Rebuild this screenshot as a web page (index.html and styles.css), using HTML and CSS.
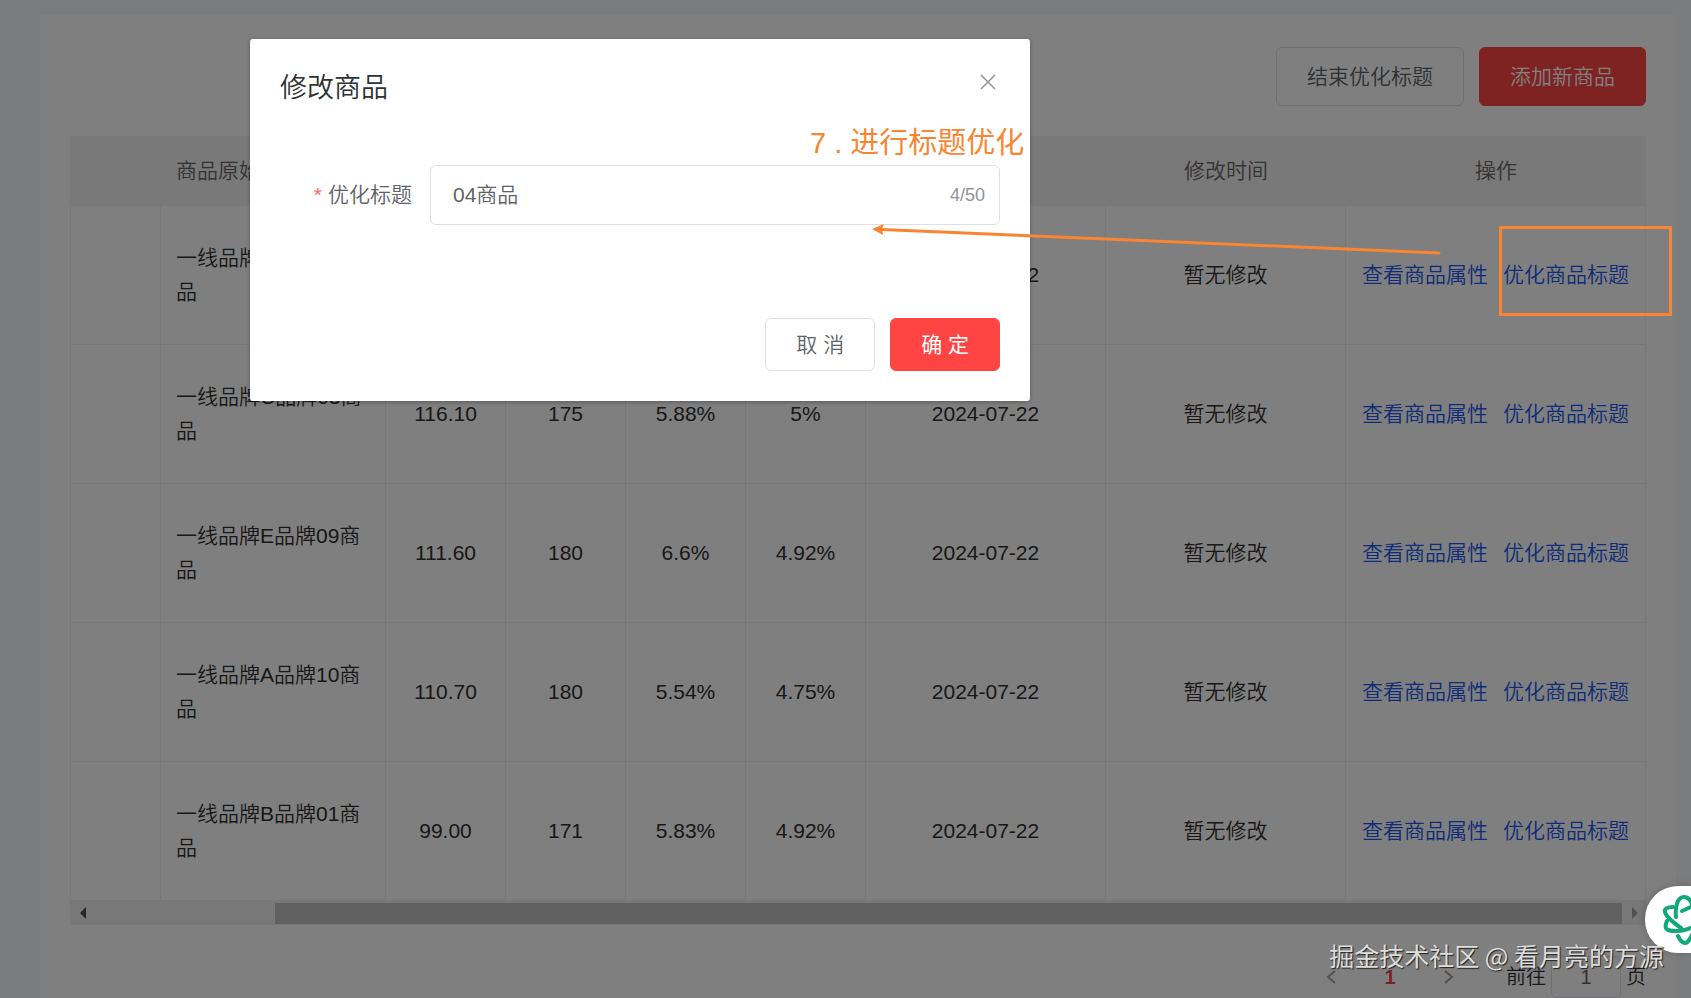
FILE: index.html
```html
<!DOCTYPE html>
<html lang="zh-CN">
<head>
<meta charset="utf-8">
<title>商品管理</title>
<link rel="stylesheet" href="styles.css">
</head>
<body>
<main class="panel">
  <div class="toolbar">
    <button class="btn btn-large" type="button">结束优化标题</button>
    <button class="btn btn-large btn-primary" type="button">添加新商品</button>
  </div>

  <div class="grid">
    <table class="goods">
      <colgroup>
        <col class="col-pick"><col class="col-title"><col class="col-num"><col class="col-num"><col class="col-num"><col class="col-num"><col class="col-date"><col class="col-date"><col class="col-action">
      </colgroup>
      <thead>
        <tr><th></th><th class="left">商品原始标题</th><th></th><th></th><th></th><th></th><th></th><th>修改时间</th><th>操作</th></tr>
      </thead>
      <tbody>
        <tr><td></td><td class="left">一线品牌D品牌04商品</td><td></td><td></td><td></td><td></td><td>2024-07-22</td><td>暂无修改</td><td><div class="links"><a href="#">查看商品属性</a><a href="#">优化商品标题</a></div></td></tr>
        <tr><td></td><td class="left">一线品牌C品牌03商品</td><td>116.10</td><td>175</td><td>5.88%</td><td>5%</td><td>2024-07-22</td><td>暂无修改</td><td><div class="links"><a href="#">查看商品属性</a><a href="#">优化商品标题</a></div></td></tr>
        <tr><td></td><td class="left">一线品牌E品牌09商品</td><td>111.60</td><td>180</td><td>6.6%</td><td>4.92%</td><td>2024-07-22</td><td>暂无修改</td><td><div class="links"><a href="#">查看商品属性</a><a href="#">优化商品标题</a></div></td></tr>
        <tr><td></td><td class="left">一线品牌A品牌10商品</td><td>110.70</td><td>180</td><td>5.54%</td><td>4.75%</td><td>2024-07-22</td><td>暂无修改</td><td><div class="links"><a href="#">查看商品属性</a><a href="#">优化商品标题</a></div></td></tr>
        <tr><td></td><td class="left">一线品牌B品牌01商品</td><td>99.00</td><td>171</td><td>5.83%</td><td>4.92%</td><td>2024-07-22</td><td>暂无修改</td><td><div class="links"><a href="#">查看商品属性</a><a href="#">优化商品标题</a></div></td></tr>
      </tbody>
    </table>
    <div class="scrollbar">
      <svg class="scroll-arrow" viewBox="0 0 24 24" aria-hidden="true"><path d="M16 6v12l-6-6z" fill="#505050"/></svg>
      <div class="scroll-track"><div class="scroll-thumb"></div></div>
      <svg class="scroll-arrow" viewBox="0 0 24 24" aria-hidden="true"><path d="M10 6v12l6-6z" fill="#a3a3a3"/></svg>
    </div>
  </div>

  <nav class="pager" aria-label="分页">
    <button class="page-btn" type="button" aria-label="上一页"><svg viewBox="0 0 16 16"><path d="M11 2 4 8l7 6"/></svg></button>
    <button class="page-btn page-current" type="button">1</button>
    <button class="page-btn" type="button" aria-label="下一页"><svg viewBox="0 0 16 16"><path d="m5 2 7 6-7 6"/></svg></button>
    <label class="jump">前往<input class="jump-input" type="text" value="1">页</label>
  </nav>
</main>

<div class="overlay">
  <section class="dialog" role="dialog" aria-labelledby="dialog-title">
    <header class="dialog-head">
      <h2 class="dialog-title" id="dialog-title">修改商品</h2>
      <button class="close" type="button" aria-label="关闭"><svg viewBox="0 0 16 16"><path d="M1 1l14 14M15 1 1 15"/></svg></button>
    </header>
    <form class="dialog-form">
      <label class="field-label" for="title-input"><span class="required">*</span>优化标题</label>
      <div class="field">
        <input class="field-input" id="title-input" type="text" value="04商品" maxlength="50">
        <span class="counter">4/50</span>
      </div>
    </form>
    <footer class="dialog-foot">
      <button class="btn" type="button">取 消</button>
      <button class="btn btn-primary btn-confirm" type="button">确 定</button>
    </footer>
  </section>
</div>

<p class="note">7 . 进行标题优化</p>
<svg class="marks" width="1691" height="998" aria-hidden="true">
  <path d="M1439 253 882 229.500" fill="none" stroke="#f98532" stroke-width="3" stroke-linecap="round"/>
  <path d="M872 229l12-5-2 5 1 6z" fill="#f98532"/>
  <rect x="1500.500" y="227.500" width="170" height="87" fill="none" stroke="#f98532" stroke-width="3"/>
</svg>

<button class="assistant" type="button" aria-label="助手">
  <svg viewBox="0 0 46 67" fill="none" stroke="#12a87a" stroke-width="4" stroke-linecap="round" stroke-linejoin="round">
    <path d="M31 31C30 22 32 11 39 11c5 0 7 4 9 9"/>
    <path d="M37 25l11-5"/>
    <path d="M28 21c-6 0-9 2-8 5 1 5 9 11 16 16"/>
    <path d="M22 35c-2 4-2 8 1 9 6 2 15 1 25-3"/>
    <path d="M33 50c2 4 5 7 7 7 3 0 5-4 8-10"/>
  </svg>
</button>
<p class="watermark">掘金技术社区 @ 看月亮的方源</p>
</body>
</html>
```
FILE: styles.css
```css
* { box-sizing: border-box; }

body {
  margin: 0;
  min-height: 100vh;
  padding: 15px 15px 0 40px;
  overflow: hidden;
  background: #f6f8fb;
  color: #303030;
  font: 350 21px/34px "Liberation Sans", "Noto Sans CJK SC", sans-serif;
}

button, input { font: inherit; }
p, h2 { margin: 0; }

.panel {
  height: calc(100vh - 15px);
  padding: 32px 30px 0;
  background: #fff;
}

.toolbar { display: flex; justify-content: flex-end; gap: 15px; }

.btn {
  height: 53px;
  padding: 0 30px;
  border: 1px solid #dcdfe6;
  border-radius: 6px;
  background: #fff;
  color: #606266;
  line-height: 24px;
  white-space: pre;
}
.btn-large { height: 59px; }
.btn-primary { border-color: #ff4444; background: #ff4444; color: #fff; }
.btn-confirm { font-weight: 400; }

.grid { margin-top: 30px; }

.goods { width: 100%; table-layout: fixed; border-collapse: separate; border-spacing: 0; border-left: 1px solid #ebeef5; }
.col-pick { width: 90px; }
.col-title { width: 225px; }
.col-num { width: 120px; }
.col-date { width: 240px; }
.goods th { height: 70px; padding: 0; background: #f2f2f2; color: #686868; font-weight: 350; }
.goods td { height: 139px; padding: 0 15px; border-right: 1px solid #ebeef5; border-bottom: 1px solid #ebeef5; text-align: center; }
.goods .left { padding: 0 15px; text-align: left; white-space: nowrap; overflow: hidden; }
.goods td.left { white-space: normal; }
.links { display: flex; justify-content: center; gap: 15px; white-space: nowrap; }
.links a { color: #2058f0; text-decoration: none; }
.goods td:last-child { padding: 0; }

.scrollbar { display: flex; align-items: center; height: 24px; background: #f1f1f1; }
.scroll-arrow { width: 24px; height: 24px; flex: none; }
.scroll-track { flex: 1; padding-left: 181px; }
.scroll-thumb { height: 21px; background: #c1c1c1; }

.pager { display: flex; justify-content: flex-end; align-items: center; margin-top: 31px; height: 42px; font-size: 20px; }
.page-btn { display: flex; align-items: center; justify-content: center; width: 58px; height: 42px; padding: 0; border: 0; background: none; }
.page-btn svg { width: 16px; height: 16px; fill: none; stroke: #a0a0a0; stroke-width: 2; }
.page-current { color: #ff4444; font-weight: 700; }
.jump { display: flex; align-items: center; gap: 5px; margin-left: 29px; }
.jump-input { width: 70px; height: 42px; padding: 0; border: 1px solid #dcdfe6; border-radius: 6px; background: #fff; color: #606266; text-align: center; }

.overlay { position: absolute; inset: 0; padding-top: 39px; background: rgba(0, 0, 0, .5); }

.dialog {
  width: 780px;
  margin-left: 250px;
  border-radius: 3px;
  background: #fff;
  box-shadow: 0 1px 4px rgba(0, 0, 0, .3);
}
.dialog-head { display: flex; justify-content: space-between; padding: 31px 30px 14px; }
.dialog-title { color: #303133; font-size: 27px; font-weight: 350; line-height: 36px; }
.close { display: flex; align-items: center; justify-content: center; width: 24px; height: 24px; padding: 0; border: 0; background: none; }
.close svg { width: 16px; height: 16px; fill: none; stroke: #909399; stroke-width: 1.5; }
.dialog-form { display: flex; padding: 45px 30px 0; }
.field-label { width: 150px; padding-right: 18px; color: #606266; line-height: 60px; text-align: right; }
.required { margin-right: 6px; color: #f56c6c; }
.field { display: flex; flex: 1; height: 60px; padding: 0 14px 0 22px; border: 1px solid #dcdfe6; border-radius: 6px; align-items: center; }
.field-input { flex: 1; min-width: 0; padding: 0; border: 0; outline: 0; background: none; color: #606266; }
.counter { color: #909399; font-size: 18px; }
.dialog-foot { display: flex; justify-content: flex-end; gap: 15px; padding: 93px 30px 30px; }

.note { position: absolute; left: 810px; top: 123px; color: #f98532; font-size: 29px; font-weight: 400; line-height: 40px; white-space: nowrap; }
.marks { position: absolute; left: 0; top: 0; }

.assistant { position: absolute; right: 0; top: 886px; width: 46px; height: 67px; padding: 0; border: 0; border-radius: 33px 0 0 33px; background: #fff; overflow: hidden; box-shadow: 0 0 9px rgba(0, 0, 0, .2); }
.assistant svg { display: block; width: 46px; height: 67px; }

.watermark { position: absolute; right: 27px; top: 936px; color: #ddd; font: 25px/38px "Noto Sans CJK SC", sans-serif; text-shadow: 1px 1px 1px #222; white-space: nowrap; }
```
